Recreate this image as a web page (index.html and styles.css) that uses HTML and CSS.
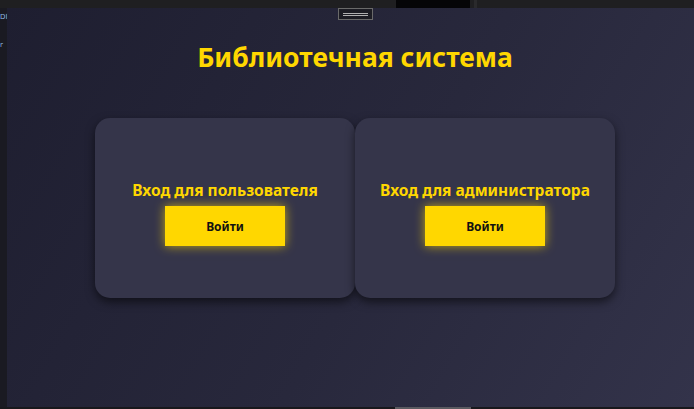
FILE: index.html
```html
<!DOCTYPE html>
<html lang="ru">
<head>
<meta charset="utf-8">
<title>Библиотечная система</title>
<link rel="stylesheet" href="styles.css">
</head>
<body>
<div class="topbar"><div class="topbar-spacer"></div><div class="topbar-thumb"></div><div class="topbar-sep"></div></div>
<div class="frame">
  <div class="side"><span class="side-a">DI</span><span class="side-b">r</span></div>
  <main class="page">
    <div class="handle"><span></span><span></span></div>
    <h1 class="title">Библиотечная система</h1>
    <div class="cards">
      <section class="card">
        <h2 class="card-title">Вход для пользователя</h2>
        <button class="btn">Войти</button>
      </section>
      <section class="card">
        <h2 class="card-title">Вход для администратора</h2>
        <button class="btn">Войти</button>
      </section>
    </div>
  </main>
</div>
<div class="bottombar"><div class="bottom-spacer"></div><div class="bottom-thumb"></div></div>
</body>
</html>
```
FILE: styles.css
```css
* { box-sizing: border-box; }
html, body { margin: 0; padding: 0; height: 100%; }
body {
  background: #1b1b1f;
  font-family: "Noto Sans", "Open Sans", sans-serif;
  display: flex;
  flex-direction: column;
  overflow: hidden;
}
.topbar {
  height: 8px;
  flex: none;
  background: #1f1f21;
  display: flex;
}
.topbar-spacer { width: 396px; }
.topbar-thumb { width: 74px; background: #050507; }
.topbar-sep { width: 3px; margin-left: 4px; background: #2a2a2c; }
.frame {
  flex: 1;
  display: flex;
  min-height: 0;
}
.side {
  width: 7px;
  flex: none;
  background: #1a1a22;
  display: flex;
  flex-direction: column;
  overflow: hidden;
  font-family: "DejaVu Sans", sans-serif;
  font-size: 7px;
  color: #8fb7e0;
  padding-top: 5px;
}
.side-b { margin-top: 20px; }
.page {
  flex: 1;
  background: linear-gradient(120deg, #1e1e30 0%, #28283c 55%, #33334a 100%);
  display: flex;
  flex-direction: column;
  align-items: center;
  padding-left: 9px;
  position: relative;
}
.handle {
  position: absolute;
  top: 0;
  left: 331px;
  width: 35px;
  height: 12px;
  border: 1px solid #6a6a6a;
  background: #1d1d24;
  display: flex;
  flex-direction: column;
  justify-content: center;
  align-items: center;
  gap: 1px;
}
.handle span { display: block; width: 25px; height: 1px; background: #b0b0b0; }
.title {
  margin: 32px 0 0;
  color: #ffd700;
  font-size: 26.5px;
  font-weight: 700;
  line-height: 34px;
  letter-spacing: 0;
}
.cards {
  display: flex;
  margin-top: 44px;
}
.card {
  width: 260px;
  height: 180px;
  background: #35354a;
  border-radius: 15px;
  box-shadow: 0 4px 10px rgba(0, 0, 0, 0.55);
  display: flex;
  flex-direction: column;
  align-items: center;
  justify-content: center;
  padding-top: 10px;
}
.card-title {
  margin: 0 0 6px;
  color: #ffd700;
  font-size: 15.5px;
  font-weight: 700;
  line-height: 20px;
}
.btn {
  width: 120px;
  height: 40px;
  border: 0;
  background: #ffd700;
  color: #111;
  font-family: inherit;
  font-size: 12px;
  font-weight: 700;
  box-shadow: 0 0 10px rgba(255, 215, 0, 0.7);
  cursor: pointer;
}
.bottombar {
  height: 2px;
  flex: none;
  background: #18181c;
  display: flex;
}
.bottom-spacer { width: 395px; }
.bottom-thumb { width: 76px; background: #5a5a60; }
```
